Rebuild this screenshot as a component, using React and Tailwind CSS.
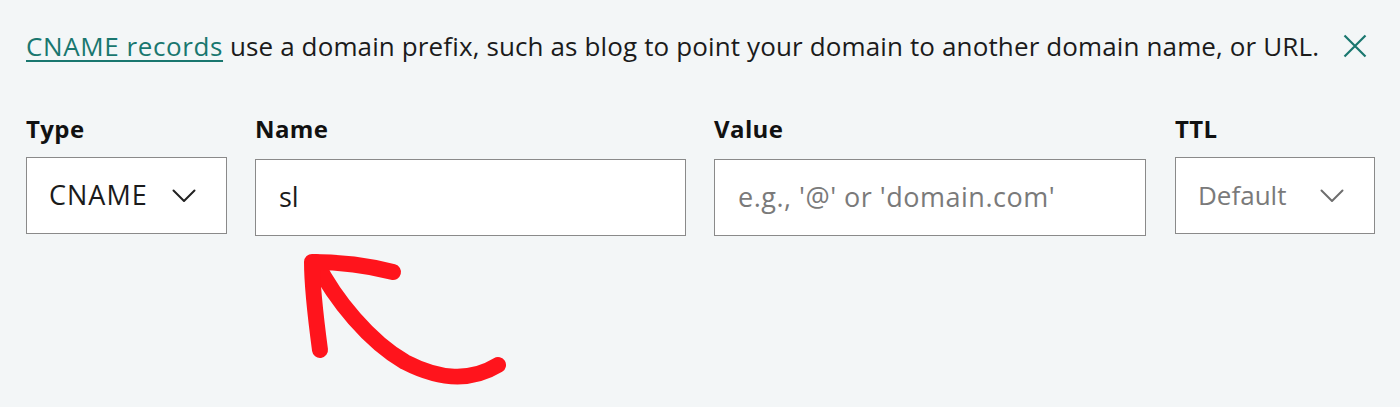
import React from "react";

function Chevron({ className }) {
  return (
    <svg className={className} width="24" height="14" viewBox="0 0 24 14" fill="none">
      <path d="M1.5 1.5 L12 12 L22.5 1.5" stroke="currentColor" strokeWidth="2" strokeLinecap="round" strokeLinejoin="round" />
    </svg>
  );
}

export default function App() {
  return (
    <div className="relative w-[1400px] h-[407px] bg-[#f3f6f7] overflow-hidden" style={{ fontFamily: "'Open Sans', Roboto, sans-serif" }}>
      <div className="pl-[26px] pr-[25px] pt-[29px]">
        <div className="flex items-center justify-between h-[34px]">
          <p className="text-[26px] text-[#1b1b1b] leading-[34px] tracking-[0.13px]">
            <a className="text-[#19776f] underline underline-offset-[4px] decoration-[1.5px] tracking-[0.6px]">CNAME records</a>{" "}
            use a domain prefix, such as blog to point your domain to another domain name, or URL.
          </p>
          <svg width="24" height="24" viewBox="0 0 24 24" className="text-[#19776f] mr-[8px]" fill="none">
            <path d="M1.5 1.5 L22.5 22.5 M22.5 1.5 L1.5 22.5" stroke="currentColor" strokeWidth="2.2" />
          </svg>
        </div>

        <div className="flex mt-[51px] gap-[28px]">
          <div className="w-[201px]">
            <div className="text-[24px] font-bold text-[#111] leading-[30px] h-[32px] tracking-[0.4px]">Type</div>
            <div className="mt-[11px] h-[77px] border border-[#8a8a8a] bg-white flex items-center justify-between pl-[22px] pr-[30px]">
              <span className="text-[27px] text-[#1b1b1b] tracking-[1px]">CNAME</span>
              <Chevron className="text-[#222]" />
            </div>
          </div>
          <div className="w-[431px]">
            <div className="text-[24px] font-bold text-[#111] leading-[30px] h-[32px] tracking-[0.4px]">Name</div>
            <div className="mt-[13px] h-[77px] border border-[#8a8a8a] bg-white flex items-center pl-[23px]">
              <span className="text-[27px] text-[#1b1b1b]">sl</span>
            </div>
          </div>
          <div className="w-[432px]">
            <div className="text-[24px] font-bold text-[#111] leading-[30px] h-[32px] tracking-[0.4px]">Value</div>
            <div className="mt-[13px] h-[77px] border border-[#8a8a8a] bg-white flex items-center pl-[23px]">
              <span className="text-[27px] text-[#7a7a7a] tracking-[0.5px]">e.g., '@' or 'domain.com'</span>
            </div>
          </div>
          <div className="w-[200px] ml-[1px]">
            <div className="text-[24px] font-bold text-[#111] leading-[30px] h-[32px] tracking-[0.4px]">TTL</div>
            <div className="mt-[11px] h-[77px] border border-[#8a8a8a] bg-white flex items-center justify-between pl-[22px] pr-[30px]">
              <span className="text-[26px] text-[#7a7a7a]">Default</span>
              <Chevron className="text-[#6e6e6e]" />
            </div>
          </div>
        </div>
      </div>

      <svg className="absolute left-0 top-0 pointer-events-none" width="1400" height="407" viewBox="0 0 1400 407" fill="none">
        <path d="M498 365 C 470 382, 440 380, 405 362 C 370 342, 335 300, 316 262" stroke="#ff141c" strokeWidth="16" strokeLinecap="round" />
        <path d="M320 350 C 316 320, 312 290, 312 262 C 340 262, 370 266, 393 272" stroke="#ff141c" strokeWidth="16" strokeLinecap="round" strokeLinejoin="round" />
      </svg>
    </div>
  );
}
